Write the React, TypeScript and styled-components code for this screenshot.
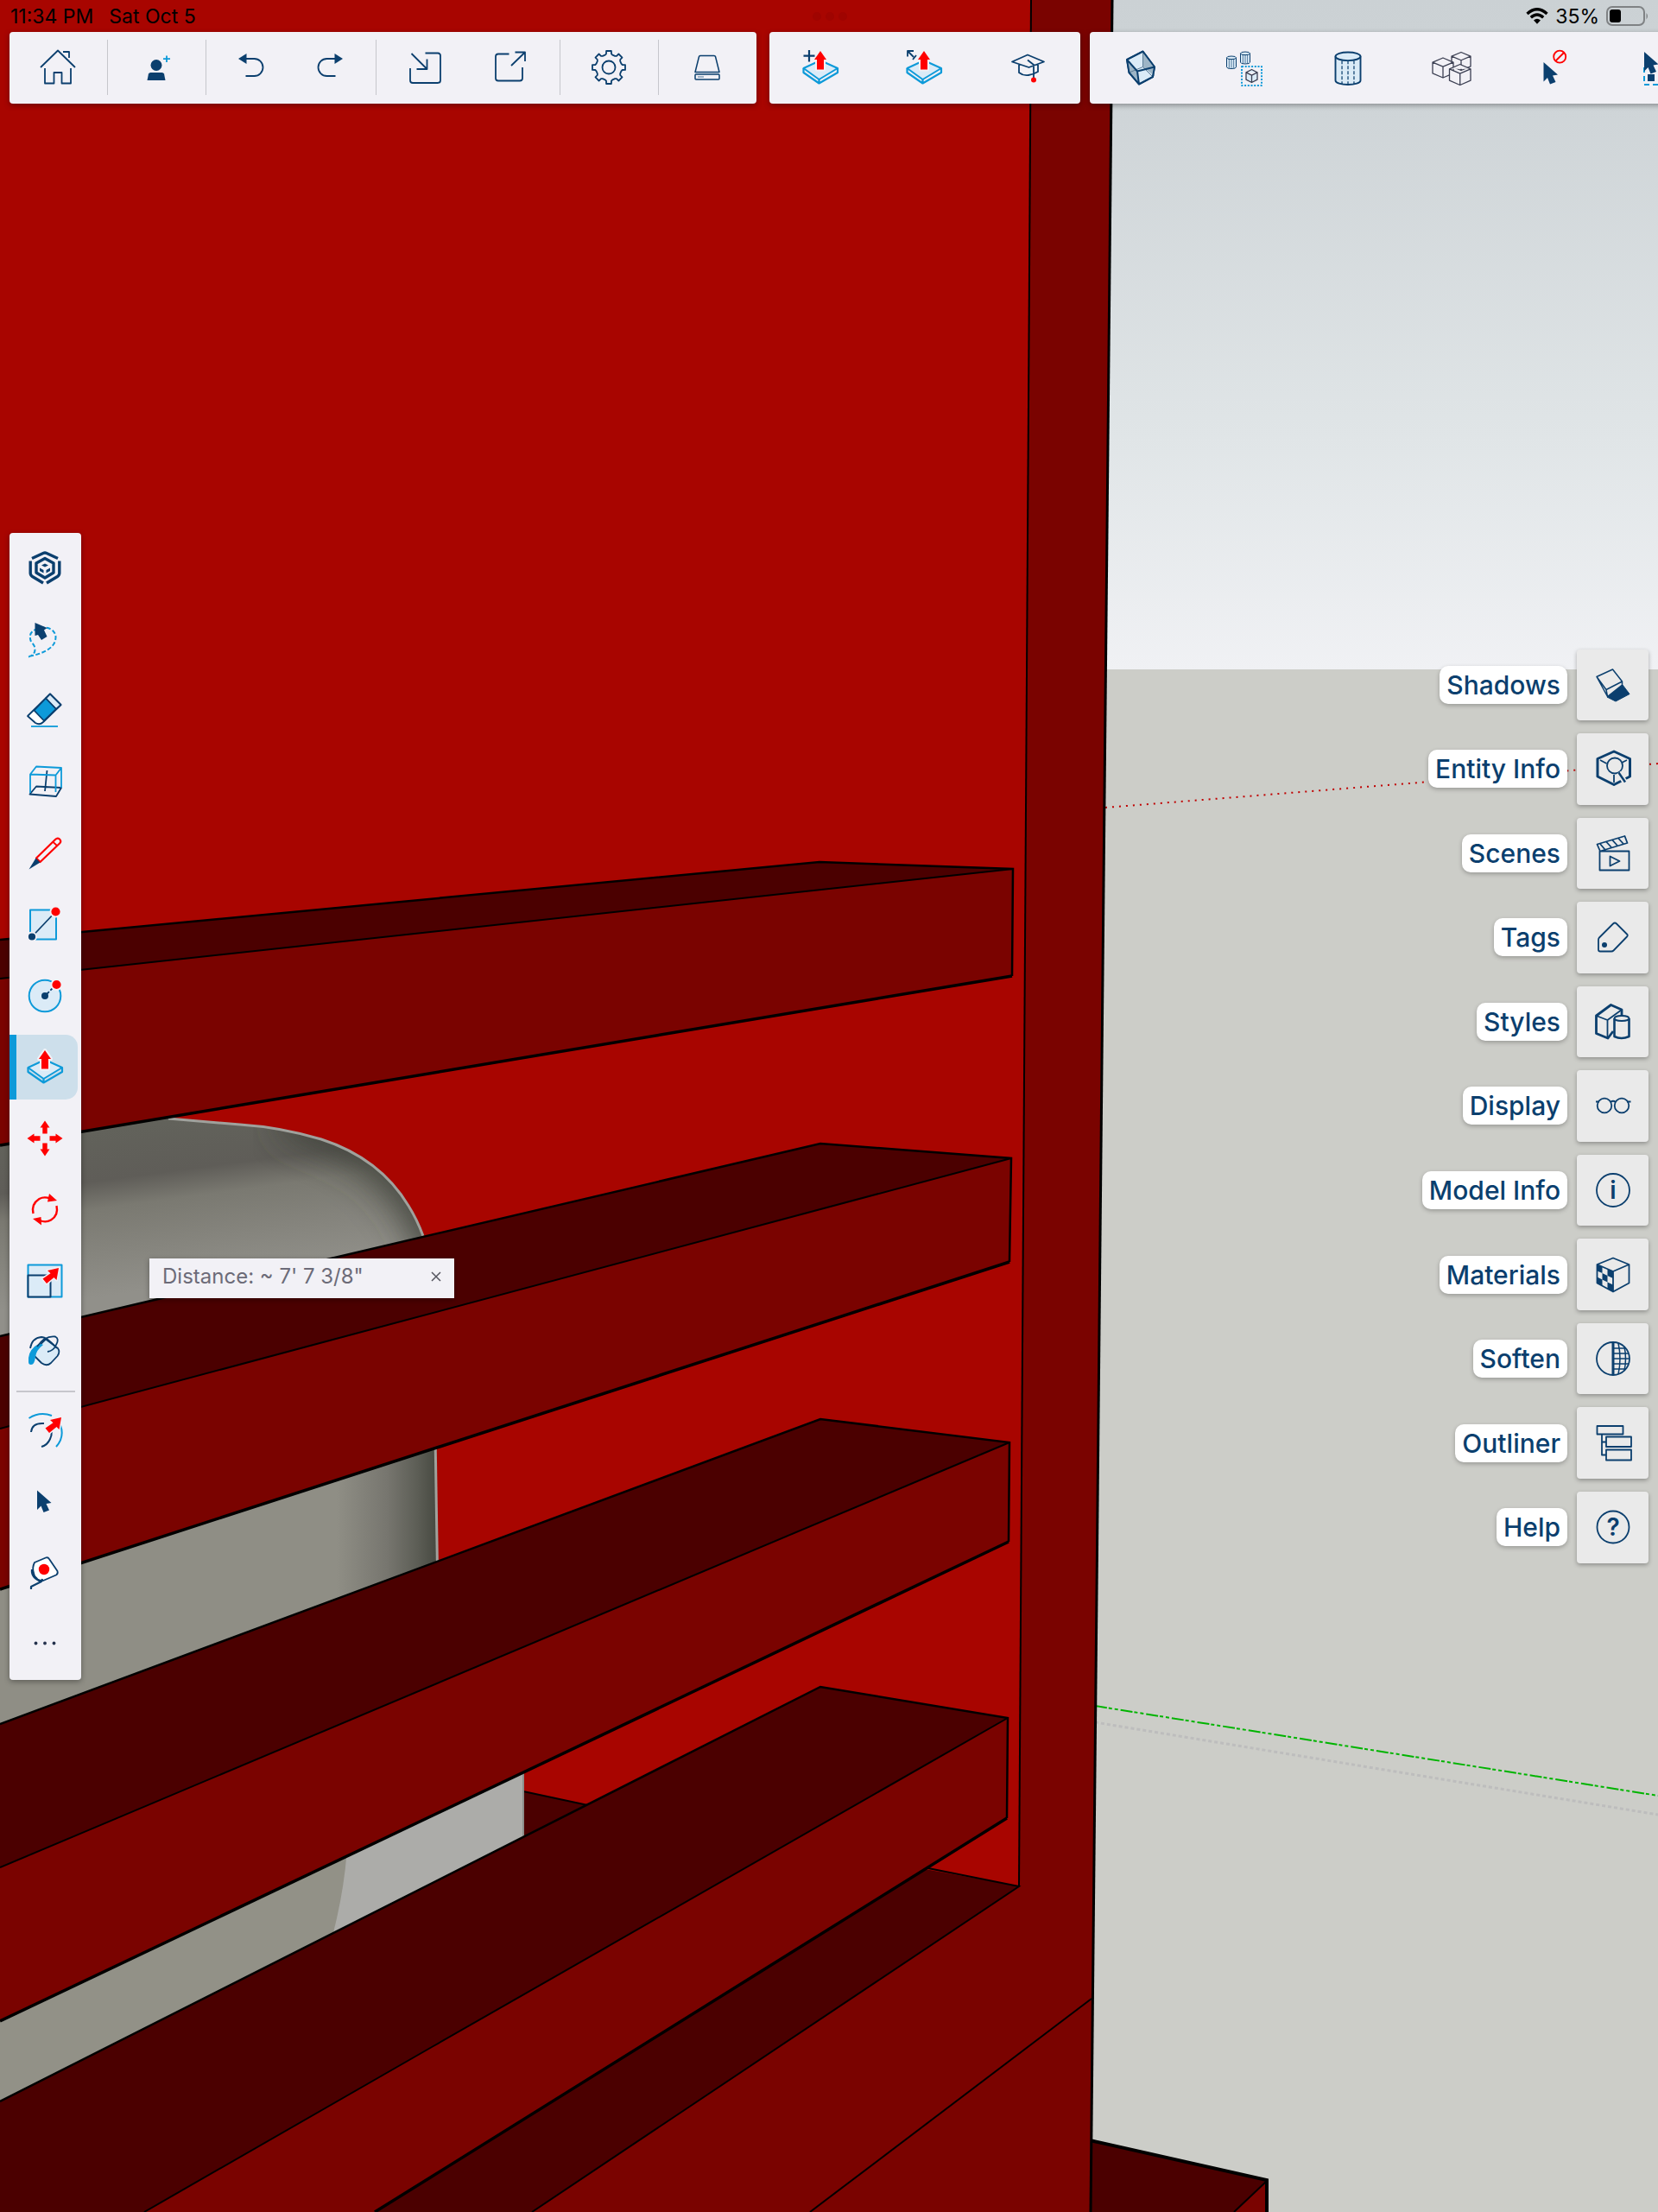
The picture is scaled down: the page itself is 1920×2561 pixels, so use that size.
import React from "react";
import styled, { createGlobalStyle, css } from "styled-components";

const NAVY = "#0b3f6e";
const BLUE = "#0d9ad9";
const PALE = "#dbebf7";
const RED = "#ff0000";
const PANEL = "#f2f1f6";
const FONT = `Inter, "Liberation Sans", sans-serif`;

const GlobalStyle = createGlobalStyle`
  *, *::before, *::after { box-sizing: border-box; }
  body { margin: 0; background: #cccdc8; font-family: ${FONT}; }
`;

/* ---------- layout ---------- */

const Stage = styled.div`
  display: grid;
  grid-template-columns: minmax(0, 1fr);
  min-height: 100vh;
  overflow: hidden;
  position: relative;
`;

const layer = css`
  grid-row: 1;
  grid-column: 1;
`;

const Scene = styled.svg`
  position: absolute;
  inset: 0;
  width: 100%;
  height: 100%;
`;

const TopArea = styled.header`
  ${layer}
  align-self: start;
  z-index: 1;
`;

const StatusBar = styled.div`
  display: grid;
  grid-template-columns: 1fr auto 1fr;
  align-items: center;
  height: 37px;
  padding: 0 10px 0 12px;
  font-size: 23px;
  line-height: 36px;
  color: #000;
`;

const StatusGroup = styled.div<{ $end?: boolean }>`
  display: flex;
  align-items: center;
  gap: ${(p) => (p.$end ? "8px" : "18px")};
  justify-content: ${(p) => (p.$end ? "flex-end" : "flex-start")};
`;

const Multitask = styled.button`
  display: flex;
  gap: 5px;
  padding: 0;
  border: 0;
  background: none;
`;

const Dot = styled.span`
  width: 10px;
  height: 10px;
  border-radius: 50%;
  background: #9f0400;
`;

const Toolbars = styled.div`
  display: flex;
  gap: 11px;
  padding-left: 11px;
`;

const panel = css`
  background: ${PANEL};
  border-radius: 4px;
  box-shadow: 0 2px 6px rgba(0, 0, 0, 0.35);
`;

const Toolbar = styled.div<{ $before?: string }>`
  ${panel}
  display: flex;
  flex: none;
  align-items: center;
  height: 83px;
  padding-bottom: 2px;
  margin-left: ${(p) => p.$before ?? "0"};
`;

const ToolGroup = styled.div`
  display: flex;
  justify-content: center;
  align-items: center;
  height: 64px;
  padding: 0 7px;

  & + & {
    border-left: 1px solid #c6c6cc;
  }
`;

const ToolButton = styled.button<{ $w: number }>`
  display: flex;
  align-items: center;
  justify-content: center;
  width: ${(p) => p.$w}px;
  height: 64px;
  padding: 0 2px 0 0;
  border: 0;
  background: none;
`;

const Glyph = styled.svg`
  display: block;
  width: 48px;
  height: 48px;
  fill: none;
  stroke: ${NAVY};
  stroke-width: 1.8;
  stroke-linejoin: round;
`;

const LeftRail = styled.nav`
  ${layer}
  ${panel}
  align-self: center;
  justify-self: start;
  z-index: 1;
  display: flex;
  flex-direction: column;
  width: 83px;
  height: 1328px;
  margin-left: 11px;
`;

const RailSlot = styled.div`
  display: flex;
  flex: 1;
  align-items: center;
`;

const RailButton = styled.button<{ $active?: boolean }>`
  display: flex;
  align-items: center;
  justify-content: center;
  width: 79px;
  height: 75px;
  padding: 0;
  border: 0;
  border-left: 8px solid ${(p) => (p.$active ? BLUE : "transparent")};
  border-radius: 0 14px 14px 0;
  background: ${(p) => (p.$active ? "#cddfeb" : "none")};
  padding-right: 5px;
`;

const RailRule = styled.hr`
  width: 68px;
  height: 2px;
  margin: 3px auto;
  border: 0;
  background: #c6c6cc;
`;

const RightRail = styled.nav`
  ${layer}
  align-self: center;
  justify-self: end;
  z-index: 1;
  display: grid;
  grid-auto-rows: 1fr;
  gap: 15px;
  height: 1058px;
  margin-right: 11px;
`;

const PanelRow = styled.div`
  display: flex;
  align-items: center;
  justify-content: flex-end;
  gap: 11px;
`;

const PanelLabel = styled.label`
  padding: 0 8px;
  border-radius: 10px;
  background: #fff;
  color: ${NAVY};
  font-size: 30px;
  font-weight: 500;
  line-height: 44px;
  box-shadow: 0 2px 5px rgba(0, 0, 0, 0.25);
`;

const PanelButton = styled.button`
  display: flex;
  align-items: center;
  justify-content: center;
  width: 83px;
  height: 100%;
  padding: 0;
  border: 0;
  border-radius: 4px;
  background: #eaeaea;
  box-shadow: 0 2px 5px rgba(0, 0, 0, 0.3);
`;

/* Floating measurement read-out that hovers over the model */
const Measurement = styled.div`
  position: absolute;
  left: 173px;
  top: 1457px;
  z-index: 2;
  display: flex;
  align-items: center;
  justify-content: space-between;
  width: 353px;
  height: 46px;
  padding: 0 12px 4px 15px;
  background: ${PANEL};
  box-shadow: 0 2px 6px rgba(0, 0, 0, 0.35);
  color: #6c6b78;
  font-size: 24px;
  line-height: 40px;
`;

const CloseButton = styled.button`
  display: flex;
  align-items: center;
  justify-content: center;
  width: 18px;
  height: 40px;
  padding: 0;
  border: 0;
  background: none;
`;

/* ---------- icon parts ---------- */

type IconFn = () => React.ReactElement;

const G = ({ children }: { children: React.ReactNode }) => (
  <Glyph viewBox="0 0 48 48" aria-hidden="true">
    {children}
  </Glyph>
);

const Pointer = ({ x, y }: { x: number; y: number }) => (
  <path
    transform={`translate(${x} ${y})`}
    d="M0 0L16.5 14.5L10.5 15.5L14 23L7.5 25.5L4.500 18L0 22.500Z"
    fill={NAVY}
    stroke="none"
  />
);

const Slab = () => (
  <g>
    <path d="M4.500 25L24 16L44 25L22.500 38Z" fill={PALE} stroke={BLUE} strokeWidth={2} />
    <path d="M4.500 25V30L22.500 42.500L44 30V25M22.500 38V42" stroke={BLUE} strokeWidth={2.2} />
    <path
      d="M24 5L31 15H28V26.500H20V15H17Z"
      fill={RED}
      stroke={PANEL}
      strokeWidth={4}
      paintOrder="stroke"
    />
  </g>
);

const Cube = ({ x, y, w, h, fill = PANEL }: { x: number; y: number; w: number; h: number; fill?: string }) => {
  const k = h * 0.22;
  return (
    <path
      d={`M${x} ${y + k}L${x + w / 2} ${y}L${x + w} ${y + k}V${y + h - k}L${x + w / 2} ${y + h}L${x} ${y + h - k}ZL${
        x + w / 2
      } ${y + 2 * k}L${x + w} ${y + k}M${x + w / 2} ${y + 2 * k}V${y + h}`}
      fill={fill}
      stroke="#3b3f52"
      strokeWidth={1.3}
    />
  );
};

const Cylinder = ({ x, y, w, h, sw }: { x: number; y: number; w: number; h: number; sw: number }) => {
  const r = w / 2;
  const e = w / 6;
  const bottom = y + h - e;
  const lines = [0.26, 0.5, 0.74].map((f) => x + w * f);
  return (
    <g strokeWidth={sw}>
      <path d={`M${x} ${y + e}V${bottom}A${r} ${e} 0 0 0 ${x + w} ${bottom}V${y + e}`} fill={PALE} />
      <ellipse cx={x + r} cy={y + e} rx={r} ry={e} fill={PALE} />
      {lines.map((l) => (
        <path key={l} d={`M${l} ${y + e * 2}V${y + h - 1}`} strokeWidth={sw * 0.65} strokeDasharray={sw > 1.5 ? "4 2" : "none"} />
      ))}
    </g>
  );
};

const gearPath = () => {
  const pts: string[] = [];
  for (let i = 0; i < 8; i++) {
    const base = (i * Math.PI) / 4 - Math.PI / 2;
    const steps: [number, number][] = [
      [-0.29, 15],
      [-0.19, 16],
      [-0.15, 19.2],
      [0.15, 19.2],
      [0.19, 16],
      [0.29, 15],
    ];
    steps.forEach(([a, r]) => {
      pts.push(`${(24 + r * Math.cos(base + a)).toFixed(1)} ${(24 + r * Math.sin(base + a)).toFixed(1)}`);
    });
  }
  return `M${pts.join("L")}Z`;
};

/* ---------- top toolbar icons ---------- */

const HomeIcon: IconFn = () => (
  <G>
    <path d="M4 24L24 4.500L44 24M30 6H37V13M9 25V42.500H19.500V30H28.500V42.500H39V25" />
  </G>
);
const AddUserIcon: IconFn = () => (
  <G>
    <ellipse cx="24" cy="21.500" rx="6.500" ry="6.500" fill={NAVY} stroke="none" />
    <path d="M13.500 39L15 31.500Q15.500 30 17.500 30H30.500Q32.500 30 33 31.500L34.500 39Z" fill={NAVY} stroke="none" />
    <path d="M36 10.500V18M32 14.200H40" stroke={BLUE} />
  </G>
);
const UndoIcon: IconFn = () => (
  <G>
    <path d="M9 14L18.500 8V20Z" fill={NAVY} stroke="none" />
    <path d="M18 14H27.500A10 10 0 0 1 27.500 34H17.500" />
  </G>
);
const RedoIcon: IconFn = () => (
  <G>
    <path d="M39 14L29.500 8V20Z" fill={NAVY} stroke="none" />
    <path d="M30 14H20.500A10 10 0 0 0 20.500 34H30.500" />
  </G>
);
const ImportIcon: IconFn = () => (
  <G>
    <path d="M24.500 7.500H39Q42 7.500 42 10.500V39Q42 42 39 42H10Q7 42 7 39V25M8.500 8L26 25.500M26.500 14.500V26H14.500" />
  </G>
);
const ExportIcon: IconFn = () => (
  <G>
    <path d="M22.500 8.500H10Q7 8.500 7 11.500V36.500Q7 39.500 10 39.500H35Q38 39.500 38 36.500V24M25 22L41 6.500M29.500 6.500H41V17" />
  </G>
);
const GearIcon: IconFn = () => (
  <G>
    <path d={gearPath()} />
    <circle cx="24" cy="24" r="7.500" />
  </G>
);
const DriveIcon: IconFn = () => (
  <G>
    <path d="M14.500 11.500Q15 10.500 16 10.500H32Q33.200 10.500 33.500 11.500L38 29.500H10Z" strokeWidth={1.5} />
    <rect x="10" y="32" width="28" height="6" rx="1" strokeWidth={1.5} />
    <path d="M13 35H20" stroke="#9fb3c8" strokeWidth={2} />
  </G>
);
const PushPullIcon: IconFn = () => (
  <G>
    <Slab />
  </G>
);
const PushPullAddIcon: IconFn = () => (
  <G>
    <Slab />
    <path d="M11 4V17.500M4.500 10.700H17.500" strokeWidth={2.200} />
  </G>
);
const PushPullStretchIcon: IconFn = () => (
  <G>
    <Slab />
    <path d="M5 11.500V5H12M5.500 5.500L12 12M15 10L11 15" />
  </G>
);
const LearnIcon: IconFn = () => (
  <G>
    <path d="M6 17.500L24 9.500L43 17.500L25.500 24ZM14 21V30Q19 34 25 33Q31 32 36 29V21M24 15.500L31 21V37" />
    <circle cx="31" cy="38.500" r="3" fill={RED} stroke="none" />
  </G>
);
const OpenBoxIcon: IconFn = () => (
  <G>
    <path d="M8 15L26.500 5.500L40 23.500L38 35L22 43.500L10.500 30Z" fill={PALE} />
    <path d="M26.500 5.500V23.500L40 34V23.500ZM8 15L20 28.500L22 43.500L10.500 30Z" fill="#9db5c6" stroke="none" />
    <path d="M26.500 5.500V23.500L10.500 30M26.500 23.500L38 35" stroke="#5d7d97" strokeWidth={1} />
    <path d="M8 15L26.500 5.500L40 23.500L38 35L22 43.500L10.500 30ZL20 28.500L22 43.500M20 28.500L40 23.500" strokeWidth={2} />
  </G>
);
const ComponentsIcon: IconFn = () => (
  <G>
    <Cylinder x={3.500} y={11} w={11} h={14.500} sw={1} />
    <Cylinder x={19.500} y={6} w={11} h={14} sw={1} />
    <rect x="21" y="23" width="23" height="22" stroke={BLUE} strokeWidth={2} strokeDasharray="2 1.700" />
    <Cube x={26} y={26.500} w={13} h={15} fill={PALE} />
  </G>
);
const CylinderIcon: IconFn = () => (
  <G>
    <Cylinder x={9.500} y={6.500} w={29} h={37.500} sw={1.900} />
  </G>
);
const CubesIcon: IconFn = () => (
  <G>
    <Cube x={24} y={6.500} w={22} h={21} />
    <Cube x={2} y={13} w={24} h={23} />
    <Cube x={21.500} y={20.500} w={24.500} h={24} />
  </G>
);
const DeselectIcon: IconFn = () => (
  <G>
    <Pointer x={10.500} y={18} />
    <circle cx="29.200" cy="11.700" r="7" stroke={RED} />
    <path d="M34 7L24.500 16.500" stroke={RED} />
  </G>
);
const InvertSelectionIcon: IconFn = () => (
  <G>
    <path d="M7 24V44H41V24" stroke={BLUE} strokeWidth={2} strokeDasharray="6 4" />
    <Pointer x={7} y={6} />
    <rect x="11" y="32" width="8" height="8" fill={NAVY} stroke="none" />
  </G>
);

/* ---------- left rail icons ---------- */

const LogoIcon: IconFn = () => (
  <G>
    <g strokeWidth={3.400}>
      <path d="M9 12.500L22 6.500Q24 5.600 26 6.500L39 12.500M7.200 15.500V29.500Q7.200 32 9.500 33.500L22 41M40.800 15.500V29.500Q40.800 32 38.500 33.500L26 41" />
      <path d="M24 12.500L34 18V29L24 35L14 29V18Z" />
    </g>
    <path d="M20 20.500L24 18.500L28 20.500L24 22.500ZM18 23.500L22.500 26V29.500L18 27ZM30 23.500L25.500 26V29.500L30 27Z" fill={NAVY} stroke="none" />
  </G>
);
const LassoIcon: IconFn = () => (
  <G>
    <path
      d="M5 44.500Q13 42 12.500 35Q12 31 8 27Q4 17 13 13Q23 8 32 13Q40 20 34 30Q27 40 5 44"
      stroke={BLUE}
      strokeDasharray="5 2.500"
      strokeWidth={2}
    />
    <path d="M12.500 5L26.500 11L23 13.500L26.500 21L20 25L16 19L12.500 20Z" fill={NAVY} stroke="none" />
  </G>
);
const EraserIcon: IconFn = () => (
  <G>
    <path d="M4 30L30 4.500L42.500 17L22 37Q18 41 13 38Z" fill="#fff" />
    <path d="M25 9.500L30 4.500L42.500 17L37 22Z" fill={PALE} />
    <path d="M11.500 23.500L25 9.500L37 22L23 35.500Z" fill={BLUE} />
    <path d="M8 42H39" stroke={BLUE} />
  </G>
);
const SectionIcon: IconFn = () => (
  <G>
    <path d="M6.500 38.500L14 29.500L43 31L37 41ZM26.500 11L24 35" />
    <path d="M7 15.500L14 6.500L43 8L36.500 16.500ZV37M36.500 16.500V36M43 8V31" stroke={BLUE} />
  </G>
);
const PencilIcon: IconFn = () => (
  <G>
    <path d="M14 29.500L36 8Q38.500 5.500 41 7.500Q43.500 10 41 12.500L18.500 34Z" stroke={RED} strokeWidth={2.200} />
    <path d="M33 10.500L38 15" stroke={RED} />
    <path d="M5.500 42.500L13.500 29.500L18.500 34.500Z" fill={NAVY} stroke="none" />
  </G>
);
const RectangleIcon: IconFn = () => (
  <G>
    <rect x="7" y="7.500" width="30" height="34" fill={PALE} stroke={BLUE} strokeWidth={2} />
    <path d="M9 38.500L36 10" />
    <circle cx="9" cy="38.500" r="5" fill={NAVY} stroke={PANEL} />
    <circle cx="36.500" cy="9.500" r="6" fill={RED} stroke={PANEL} />
  </G>
);
const CircleIcon: IconFn = () => (
  <G>
    <circle cx="24" cy="24" r="18.300" fill={PALE} stroke={BLUE} strokeWidth={2} />
    <path d="M24 24L37 11" strokeDasharray="7 2" />
    <circle cx="24" cy="24" r="4" fill={NAVY} stroke="none" />
    <circle cx="37.500" cy="11" r="6" fill={RED} stroke={PANEL} />
  </G>
);
const MoveIcon: IconFn = () => (
  <G>
    {[0, 90, 180, 270].map((a) => (
      <path key={a} transform={`rotate(${a} 24 24)`} d="M24 3.500L29.500 11.500H26.700V18.500H21.300V11.500H18.500Z" fill={RED} stroke="none" />
    ))}
  </G>
);
const RotateIcon: IconFn = () => (
  <G>
    <g stroke={RED} strokeWidth={2.4}>
      <path d="M10.500 29Q8 18 17.500 12Q23 9 30 11.500M37.500 20Q40 31 31 36.500Q25 40 18 37" />
      <path d="M29 6L38 14L27 15.500ZM19.500 33L10 35L20 42.500Z" fill={RED} stroke="none" />
    </g>
  </G>
);
const redArrow = (x: number, y: number) => (
  <path
    transform={`translate(${x} ${y})`}
    d="M0 0L-13 3L-9.500 6.200L-18.500 12.500L-14 18L-5.500 11L-2.500 14Z"
    fill={RED}
    stroke={PANEL}
    strokeWidth={3}
    paintOrder="stroke"
  />
);
const ScaleIcon: IconFn = () => (
  <G>
    <rect x="4.500" y="5.500" width="39" height="37" fill={PALE} stroke={BLUE} strokeWidth={2} />
    <rect x="4.500" y="17.500" width="26" height="25" fill={PALE} strokeWidth={2} />
    {redArrow(40, 9)}
  </G>
);
const PaintIcon: IconFn = () => (
  <G>
    <path d="M12 22L25 9.500L39 20Q42 24 38.500 29L31 37Q26 41.500 20 37L11 28Z" fill={PALE} />
    <path d="M5 36Q4 25 12 18Q18 13 22 16Q14 22 13 30Q12 39 8 39Q5 39 5 36Z" fill={BLUE} stroke="none" />
    <path d="M7 20Q9 8 20 7Q26 7 38 20M15 18Q24 5 36 6.500Q41 9 37 16Q34 23 27 24" />
  </G>
);
const OffsetIcon: IconFn = () => (
  <G>
    <path d="M5.500 10Q18 2 32 7M42 18Q47 32 37 43" stroke={BLUE} strokeWidth={2} />
    <path d="M8 26Q9 15 23 16M29 19Q34 26 30 34Q27 41 20 43" strokeWidth={2} />
    {redArrow(43, 9)}
  </G>
);
const SelectIcon: IconFn = () => (
  <G>
    <Pointer x={15} y={11.500} />
  </G>
);
const TapeIcon: IconFn = () => (
  <G>
    <path d="M12 12L25 6.500Q27.500 5.500 29 8L38.500 22Q39.500 25 37 26.500L22 33Q12 33 11 24Q9 18 12 12Z" fill="#fff" />
    <path d="M9 20Q8 30 20 34L8 40V43M20 34L21 31M11 27L15 31" strokeWidth={2.200} />
    <circle cx="23" cy="20" r="6.200" fill={RED} stroke="none" />
  </G>
);
const MoreIcon: IconFn = () => (
  <G>
    {[13.500, 24, 34.500].map((cx) => (
      <circle key={cx} cx={cx} cy="23.500" r="1.900" fill="#25324d" stroke="none" />
    ))}
  </G>
);

/* ---------- right rail icons ---------- */

const ShadowsIcon: IconFn = () => (
  <G>
    <path d="M35 24L43 34.500L27 43L17 38Z" fill={NAVY} stroke={NAVY} strokeWidth={1} />
    <path d="M5 14.500L23.500 6L34.500 20V24L17.500 37.500ZM5 14.500L16 29.500L34.500 20M16 29.500L17.500 37.500" fill="#eaeaea" strokeWidth={1.500} />
  </G>
);
const EntityIcon: IconFn = () => (
  <G>
    <path d="M25 4L43.500 12.500V33L25 42.500L6 33V12.500Z" strokeWidth={3} />
    <path d="M9 14L16.500 18M40 14L34 17M25 31V40" />
    <circle cx="26" cy="20.500" r="9" fill="#eaeaea" />
    <path d="M30.500 28.500L38 40" stroke="#eaeaea" strokeWidth={6} />
    <path d="M30.500 28.500L38 39.500" strokeWidth={2.400} />
  </G>
);
const ScenesIcon: IconFn = () => (
  <G>
    <path d="M5.500 13.500L37.500 4L40.500 12L9 21.500ZM8.500 21.500H42.500V43.500H8.500ZM20.500 27.500L31.500 33L20.500 38.500Z" />
    <path d="M9 13L14.500 19.500M16 10.500L22 17M23 8.500L29 15M30 6.500L36 13" />
  </G>
);
const TagsIcon: IconFn = () => (
  <G>
    <path d="M24 8.500Q26 6.500 28 8.500L40 20.500Q41.500 22 40 23.500L24.500 39.500Q23.500 40.500 22 40.500H9Q7 40.500 7 38.500V27Q7 25.500 8 24.500Z" />
    <circle cx="14" cy="33" r="3" fill={NAVY} stroke="none" />
  </G>
);
const StylesIcon: IconFn = () => (
  <G>
    <path d="M34 17V10L21.500 4.500L4.500 17V37.500L18 43L24 35" strokeWidth={2.800} />
    <path d="M4.500 17L17.500 22L34 10M17.500 22V43" />
    <path d="M25.500 20V41Q33.500 45 42.500 41V20" fill="#eaeaea" strokeWidth={2.600} />
    <ellipse cx="34" cy="20" rx="8.500" ry="3" fill="#eaeaea" />
  </G>
);
const DisplayIcon: IconFn = () => (
  <G>
    <circle cx="14" cy="24" r="8.300" />
    <circle cx="34" cy="24" r="8.300" />
    <path d="M4 19.500H8M40 19.500H44.500M21 20Q24 17.500 27 20" />
  </G>
);
const IconLetter = styled.text`
  font-family: ${FONT};
  font-size: 28px;
  font-weight: 600;
  text-anchor: middle;
  fill: ${NAVY};
  stroke: none;
`;
const InfoIcon: IconFn = () => (
  <G>
    <circle cx="24" cy="24" r="19" />
    <IconLetter x="24" y="34">i</IconLetter>
  </G>
);
const HelpIcon: IconFn = () => (
  <G>
    <circle cx="24" cy="24" r="18.500" />
    <IconLetter x="24" y="34">?</IconLetter>
  </G>
);
const MaterialsIcon: IconFn = () => (
  <G>
    <path d="M24 4.500L42.500 12V33.500L24 43.500L5.500 33.500V12ZM5.500 12L24 20L42.500 12M24 20V43.500" />
    <path
      d="M5.500 12L11.500 14.600V22L5.500 19.500ZM17.500 17.300L24 20V28L17.500 25ZM11.500 22L17.500 25V32.500L11.500 29.500ZM5.500 26.500L11.500 29.500V36.500L5.500 33.500ZM17.500 32.500L24 35.500V43.500L17.500 40Z"
      fill={NAVY}
      stroke="none"
    />
  </G>
);
const SoftenIcon: IconFn = () => (
  <G>
    <circle cx="24" cy="24" r="19" />
    <path d="M24 5V43" strokeWidth={3} />
    <path d="M30 6Q34 24 30 42M37 10Q40 24 37 38M24 12H38M24 18H42M24 24H43M24 30H42M24 36H39" strokeWidth={1.500} />
  </G>
);
const OutlinerIcon: IconFn = () => (
  <G>
    <path d="M5.500 4H35.500V13.500H5.500ZM16 16.500H45V28H16ZM16 31.500H45V43.500H16ZM11 13.500V37.500H16M11 22.500H16" />
  </G>
);

/* ---------- model view ---------- */

const FRONT = "#a80500";
const SIDE = "#7a0300";
const UNDER = "#4b0000";

type Beam = { top: string; face: string; back: string; edge: string; lower: string };

const beams: Beam[] = [
  {
    top: "0,1088 949,998 1173,1006 0,1133",
    face: "0,1133 1173,1006 1172,1130 0,1326",
    back: "0,1088 949,998 1173,1006 1172,1130",
    edge: "0,1133 1173,1006",
    lower: "0,1326 1172,1130",
  },
  {
    top: "0,1547 950,1324 1171,1341 0,1654",
    face: "0,1654 1171,1341 1169,1461 0,1840",
    back: "0,1547 950,1324 1171,1341 1169,1461",
    edge: "0,1654 1171,1341",
    lower: "0,1840 1169,1461",
  },
  {
    top: "0,1996 950,1643 1169,1670 0,2162",
    face: "0,2162 1169,1670 1168,1785 0,2340",
    back: "0,1996 950,1643 1169,1670 1168,1785",
    edge: "0,2162 1169,1670",
    lower: "0,2340 1168,1785",
  },
  {
    top: "0,2433 950,1953 1167,1989 167,2561 0,2561",
    face: "167,2561 1167,1989 1166,2105 434,2561",
    back: "0,2433 950,1953 1167,1989 1166,2105",
    edge: "167,2561 500,2370 1167,1989",
    lower: "434,2561 500,2520 1166,2105",
  },
];

const CURVE = "M195 1295L278 1302Q325 1305 372 1319Q440 1341 473 1396Q483 1412 490 1431";

const ModelView = () => (
  <Scene viewBox="0 0 1920 2561" preserveAspectRatio="xMidYMid slice" aria-hidden="true">
    <defs>
      <linearGradient id="sky" x1="0" y1="0" x2="0" y2="1">
        <stop offset="0" stopColor="#cbd1d4" />
        <stop offset="0.15" stopColor="#ced4d7" />
        <stop offset="0.65" stopColor="#e0e5e7" />
        <stop offset="1" stopColor="#f0f1f4" />
      </linearGradient>
      <linearGradient id="hollow" gradientUnits="userSpaceOnUse" x1="100" y1="1290" x2="128" y2="1500">
        <stop offset="0" stopColor="#63645c" />
        <stop offset="0.37" stopColor="#5f5d58" />
        <stop offset="0.52" stopColor="#7a7971" />
        <stop offset="1" stopColor="#91908a" />
      </linearGradient>
      <linearGradient id="jamb" gradientUnits="userSpaceOnUse" x1="390" y1="0" x2="506" y2="0">
        <stop offset="0" stopColor="#8f8e85" />
        <stop offset="0.5" stopColor="#77766f" />
        <stop offset="0.8" stopColor="#5d5e56" />
        <stop offset="1" stopColor="#474941" />
      </linearGradient>
      <filter id="soft" x="-20%" y="-20%" width="140%" height="140%">
        <feGaussianBlur stdDeviation="20" />
      </filter>
      <clipPath id="hollowClip">
        <path d={`M0 1300L${CURVE.slice(1)}V1600H0Z`} />
      </clipPath>
    </defs>

    <rect width="1920" height="776" fill="url(#sky)" />
    <rect y="775" width="1920" height="1786" fill="#cccdc8" />
    <path d="M1280 935L1920 884" stroke="#c00000" strokeWidth="2" strokeDasharray="2 6" />
    <path d="M1268 1975L1920 2079" stroke="#00b400" strokeWidth="2" strokeDasharray="14 2 4 3 4 3" />
    <path d="M1268 1994L1920 2101" stroke="#bdbdbd" strokeWidth="3" strokeDasharray="4 3" />

    <path d="M1262 2478L1467 2524V2561H1262Z" fill={UNDER} />
    <path d="M1467 2524V2561H1429Z" fill={SIDE} />
    <path d="M1429 2561L1467 2525" stroke="#000" strokeWidth="2" />
    <path d="M1262 2478L1467 2524V2561" stroke="#000" strokeWidth="4" fill="none" />

    <path d="M0 0H1288L1263 2561H0Z" fill={SIDE} />
    <path d="M0 0H1194L1180 2184H0Z" fill={FRONT} />
    <path d="M1194 0L1180 2184" stroke="#000" strokeWidth="2" />

    <g clipPath="url(#hollowClip)">
      <rect y="1280" width="520" height="300" fill="url(#hollow)" />
      <path d="M330 1290L400 1318L450 1350L485 1395L515 1460" fill="none" stroke="#40423b" strokeWidth="42" filter="url(#soft)" />
    </g>
    <path d={CURVE} fill="none" stroke="#a0a19c" strokeWidth="3" />

    <path d="M0 1700H391V2100H0Z" fill="#8f8e85" />
    <path d="M390 1660H504L507 1850H390Z" fill="url(#jamb)" />
    <path d="M504 1660L507 1850" stroke="#a0a19c" strokeWidth="3" />

    <path d="M606 2074L690 2092V2200H606Z" fill={UNDER} />
    <path d="M606 2074L690 2092" stroke="#000" strokeWidth="2" />
    <path d="M0 2040H606V2200L300 2500H0Z" fill="#acaca9" />
    <path d="M0 2100V2500L380 2260Q403 2180 403 2110Z" fill="#929187" />
    <path d="M606 2040V2130" stroke="#8d8e8b" strokeWidth="2" />

    <path d="M1071 2164L1180 2184L616 2561H400L434 2500Z" fill={UNDER} />
    <path d="M1180 2184L616 2561H1263V2184Z" fill={SIDE} />
    <path d="M1060 2160L1180 2184L616 2561" fill="none" stroke="#000" strokeWidth="2" />
    <path d="M1264 2314L938 2561" stroke="#000" strokeWidth="2" />
    <path d="M1288 0L1263 2561" stroke="#000" strokeWidth="3" />

    {beams.map((b) => (
      <g key={b.edge} fill="none" stroke="#000" strokeWidth="2">
        <polygon points={b.top} fill={UNDER} stroke="none" />
        <polygon points={b.face} fill={SIDE} stroke="none" />
        <polyline points={b.back} strokeWidth="2.500" />
        <polyline points={b.edge} />
        <polyline points={b.lower} strokeWidth="3.500" />
      </g>
    ))}
  </Scene>
);

/* ---------- data ---------- */

type Tool = { name: string; icon: IconFn; w?: number };

const mainGroups: Tool[][] = [
  [{ name: "Home", icon: HomeIcon }],
  [{ name: "Share", icon: AddUserIcon }],
  [
    { name: "Undo", icon: UndoIcon, w: 91 },
    { name: "Redo", icon: RedoIcon, w: 91 },
  ],
  [
    { name: "Import", icon: ImportIcon },
    { name: "Export", icon: ExportIcon },
  ],
  [{ name: "Settings", icon: GearIcon }],
  [{ name: "Storage", icon: DriveIcon }],
];

const modifierTools: Tool[] = [
  { name: "New face", icon: PushPullAddIcon },
  { name: "Stretch", icon: PushPullStretchIcon },
  { name: "Learn", icon: LearnIcon },
];

const selectionTools: Tool[] = [
  { name: "Edit group", icon: OpenBoxIcon },
  { name: "Make component", icon: ComponentsIcon },
  { name: "Make group", icon: CylinderIcon },
  { name: "Explode", icon: CubesIcon },
  { name: "Deselect", icon: DeselectIcon },
  { name: "Invert selection", icon: InvertSelectionIcon },
];

const drawTools: Tool[] = [
  { name: "Menu", icon: LogoIcon },
  { name: "Lasso", icon: LassoIcon },
  { name: "Eraser", icon: EraserIcon },
  { name: "Section", icon: SectionIcon },
  { name: "Line", icon: PencilIcon },
  { name: "Rectangle", icon: RectangleIcon },
  { name: "Circle", icon: CircleIcon },
  { name: "Push/Pull", icon: PushPullIcon },
  { name: "Move", icon: MoveIcon },
  { name: "Rotate", icon: RotateIcon },
  { name: "Scale", icon: ScaleIcon },
  { name: "Paint", icon: PaintIcon },
];

const recentTools: Tool[] = [
  { name: "Offset", icon: OffsetIcon },
  { name: "Select", icon: SelectIcon },
  { name: "Tape measure", icon: TapeIcon },
  { name: "More tools", icon: MoreIcon },
];

const panels: Tool[] = [
  { name: "Shadows", icon: ShadowsIcon },
  { name: "Entity Info", icon: EntityIcon },
  { name: "Scenes", icon: ScenesIcon },
  { name: "Tags", icon: TagsIcon },
  { name: "Styles", icon: StylesIcon },
  { name: "Display", icon: DisplayIcon },
  { name: "Model Info", icon: InfoIcon },
  { name: "Materials", icon: MaterialsIcon },
  { name: "Soften", icon: SoftenIcon },
  { name: "Outliner", icon: OutlinerIcon },
  { name: "Help", icon: HelpIcon },
];

const RailTools = ({ tools, active }: { tools: Tool[]; active: string }) => (
  <>
    {tools.map(({ name, icon: Icon }) => (
      <RailSlot key={name}>
        <RailButton type="button" aria-label={name} $active={name === active}>
          <Icon />
        </RailButton>
      </RailSlot>
    ))}
  </>
);

export default function App() {
  return (
    <Stage>
      <GlobalStyle />
      <ModelView />

      <TopArea>
        <StatusBar>
          <StatusGroup>
            <span>11:34 PM</span>
            <span>Sat Oct 5</span>
          </StatusGroup>
          <Multitask type="button" aria-label="Multitasking">
            <Dot />
            <Dot />
            <Dot />
          </Multitask>
          <StatusGroup $end>
            <svg width="26" height="19" viewBox="0 0 26 19" aria-hidden="true">
              <g fill="none" stroke="#000" strokeWidth="3.400">
                <path d="M1.500 7Q13 -3.500 24.500 7" />
                <path d="M5.800 11.300Q13 4.800 20.200 11.300" />
              </g>
              <path d="M9 14.500Q13 11 17 14.500L13 18.800Z" />
            </svg>
            <span>35%</span>
            <svg width="50" height="24" viewBox="0 0 50 24" aria-hidden="true">
              <rect x="1" y="1" width="43" height="21" rx="6" fill="none" stroke="#7f8284" strokeWidth="2" />
              <rect x="4" y="4" width="13" height="15" rx="3" />
              <path d="M46.500 8V15.500Q49.500 11.700 46.500 8Z" fill="#7f8284" />
            </svg>
          </StatusGroup>
        </StatusBar>

        <Toolbars>
          <Toolbar>
            {mainGroups.map((group) => (
              <ToolGroup key={group[0].name}>
                {group.map(({ name, icon: Icon, w }) => (
                  <ToolButton key={name} type="button" aria-label={name} $w={w ?? 99}>
                    <Icon />
                  </ToolButton>
                ))}
              </ToolGroup>
            ))}
          </Toolbar>
          <Toolbar $before="4px">
            {modifierTools.map(({ name, icon: Icon }) => (
              <ToolButton key={name} type="button" aria-label={name} $w={120}>
                <Icon />
              </ToolButton>
            ))}
          </Toolbar>
          <Toolbar>
            {selectionTools.map(({ name, icon: Icon }) => (
              <ToolButton key={name} type="button" aria-label={name} $w={120}>
                <Icon />
              </ToolButton>
            ))}
          </Toolbar>
        </Toolbars>
      </TopArea>

      <LeftRail aria-label="Drawing tools">
        <RailTools tools={drawTools} active="Push/Pull" />
        <RailRule />
        <RailTools tools={recentTools} active="Push/Pull" />
      </LeftRail>

      <RightRail aria-label="Panels">
        {panels.map(({ name, icon: Icon }) => {
          const id = `panel-${name.toLowerCase().replace(" ", "-")}`;
          return (
            <PanelRow key={name}>
              <PanelLabel htmlFor={id}>{name}</PanelLabel>
              <PanelButton id={id} type="button">
                <Icon />
              </PanelButton>
            </PanelRow>
          );
        })}
      </RightRail>

      <Measurement role="status">
        <span>Distance: ~ 7' 7 3/8"</span>
        <CloseButton type="button" aria-label="Close">
          <svg width="12" height="12" viewBox="0 0 12 12" aria-hidden="true">
            <path d="M1 1L11 11M11 1L1 11" stroke="#55555f" strokeWidth="1.500" />
          </svg>
        </CloseButton>
      </Measurement>
    </Stage>
  );
}
